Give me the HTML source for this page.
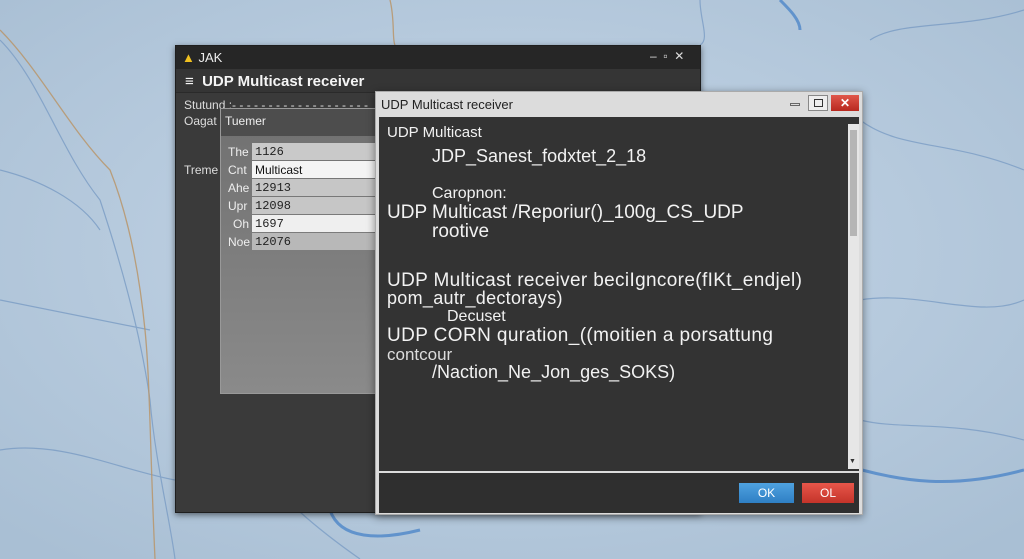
<!DOCTYPE html>
<html><head><meta charset="utf-8"><style>
*{margin:0;padding:0;box-sizing:border-box}
body{width:1024px;height:559px;overflow:hidden;background:#b9cde0;font-family:"Liberation Sans",sans-serif;position:relative}
.abs{position:absolute}
.t{position:absolute;white-space:nowrap;color:#f2f2f2}
.v{position:absolute;left:30px;top:0;width:124px;height:17px;color:#222;padding:2px 3px;font-size:12px;font-family:'Liberation Mono',monospace}
</style></head><body>
<svg class="abs" style="left:0;top:0" width="1024" height="559" viewBox="0 0 1024 559">
<defs><radialGradient id="g" cx="50%" cy="45%" r="70%"><stop offset="0" stop-color="#c6d7e8"/><stop offset="1" stop-color="#a9bfd4"/></radialGradient></defs>
<rect width="1024" height="559" fill="url(#g)"/>
<g fill="none" stroke="#7a9cc4" stroke-width="1.2" opacity="0.8">
<path d="M0 40 C40 80 60 150 100 200 C120 260 140 330 150 400 C155 460 170 520 175 559"/>
<path d="M0 170 C40 180 80 200 100 230"/>
<path d="M0 300 C50 310 100 320 150 330"/>
<path d="M0 450 C60 440 120 470 175 480"/>
<path d="M860 120 C900 150 950 140 1024 170"/>
<path d="M860 300 C920 290 980 320 1024 300"/>
<path d="M870 40 C900 20 960 30 1024 10"/>
<path d="M300 512 C320 530 340 545 360 559"/>
<path d="M700 0 C700 20 710 40 700 45"/>
<path d="M860 420 C900 430 950 420 1024 440"/>
</g>
<g fill="none" stroke="#b8956a" stroke-width="1.3" opacity="0.85">
<path d="M0 30 C40 70 70 130 110 170 C130 220 140 280 145 330 C150 380 150 450 155 559"/>
<path d="M390 0 C395 20 392 40 395 45"/>
</g>
<g fill="none" stroke="#4e86c8" stroke-width="3" opacity="0.8">
<path d="M330 510 C340 540 380 540 420 530"/>
<path d="M862 470 C900 480 950 490 1024 470"/>
<path d="M780 0 C790 10 800 20 800 30"/>
</g>
</svg>

<div class="abs" style="left:175px;top:45px;width:526px;height:468px;background:#3a3a3a;border:1px solid #1e1e1e;box-shadow:0 2px 6px rgba(0,0,0,.5)">
 <div class="abs" style="left:0;top:0;width:524px;height:23px;background:#262626"></div>
 <div class="t" style="left:6px;top:4px;font-size:13px;color:#eee"><span style="color:#f0c020">▲</span> JAK</div>
 <div class="t" style="left:474px;top:3px;font-size:12px;color:#ddd">–&nbsp;&nbsp;▫&nbsp;&nbsp;✕</div>
 <div class="abs" style="left:0;top:23px;width:524px;height:24px;background:#353535;border-bottom:1px solid #2a2a2a"></div>
 <div class="t" style="left:9px;top:27px;font-size:15px;font-weight:bold;color:#f5f5f5">≡&nbsp; UDP Multicast receiver</div>
 <div class="t" style="left:8px;top:52px;font-size:12px;color:#ddd">Stutund :- - - - - - - - - - - - - - - - - - -</div>
 <div class="t" style="left:8px;top:68px;font-size:12px;color:#ddd">Oagat</div>
 <div class="t" style="left:8px;top:117px;font-size:12px;color:#ddd">Treme</div>
 <div class="abs" style="left:44px;top:62px;width:162px;height:286px;background:linear-gradient(#707070,#8a8a8a);border:1px solid #999">
  <div class="abs" style="left:0;top:0;width:160px;height:27px;background:#4d4d4d"></div>
  <div class="t" style="left:4px;top:5px;font-size:12px;color:#eee">Tuemer</div>
 </div>
</div>
<div class="abs" style="left:222px;top:143px;width:154px;font-size:12px">
 <div style="height:18px;position:relative"><span class="t" style="left:6px;top:2px;color:#eee">The</span><div class="v" style="background:#c9c9c9">1126</div></div>
 <div style="height:18px;position:relative"><span class="t" style="left:6px;top:2px;color:#eee">Cnt</span><div class="v" style="background:#f4f4f4;font-family:'Liberation Sans',sans-serif;color:#111">Multicast</div></div>
 <div style="height:18px;position:relative"><span class="t" style="left:6px;top:2px;color:#eee">Ahe</span><div class="v" style="background:#c6c6c6">12913</div></div>
 <div style="height:18px;position:relative"><span class="t" style="left:6px;top:2px;color:#eee">Upr</span><div class="v" style="background:#c6c6c6">12098</div></div>
 <div style="height:18px;position:relative"><span class="t" style="left:11px;top:2px;color:#eee">Oh</span><div class="v" style="background:#efefef">1697</div></div>
 <div style="height:18px;position:relative"><span class="t" style="left:6px;top:2px;color:#eee">Noe</span><div class="v" style="background:#b8b8b8">12076</div></div>
</div>

<div class="abs" style="left:375px;top:91px;width:488px;height:424px;background:#dcdcdc;border:1px solid #aaa;box-shadow:0 2px 8px rgba(0,0,0,.45)">
 <div class="t" style="left:5px;top:5px;font-size:13px;color:#222">UDP Multicast receiver</div>
 <div class="abs" style="left:414px;top:11px;width:10px;height:3px;border:1px solid #666"></div>
 <div class="abs" style="left:432px;top:3px;width:20px;height:16px;border:1px solid #888;background:#eee"><div style="margin:3px 5px;width:9px;height:8px;border:1px solid #333"></div></div>
 <div class="abs" style="left:455px;top:3px;width:28px;height:16px;background:linear-gradient(#e0574a,#b8281f);color:#fff;font-size:12px;text-align:center;line-height:16px;font-weight:bold">✕</div>
 <div class="abs" style="left:3px;top:25px;width:480px;height:354px;background:#333333"></div>
 <div class="abs" style="left:472px;top:32px;width:11px;height:345px;background:#e6e6e6"><div style="margin:6px 2px;width:7px;height:106px;background:#b5b5b5"></div></div>
 <div class="t" style="left:473px;top:27px;font-size:7px;color:#333">▲</div>
 <div class="t" style="left:473px;top:366px;font-size:7px;color:#333">▼</div>
 <div class="abs" style="left:3px;top:381px;width:480px;height:40px;background:#2f2f2f"></div>
 <div class="abs" style="left:363px;top:391px;width:55px;height:20px;background:linear-gradient(#4fa2e0,#2f7fc4);color:#fff;font-size:12px;text-align:center;line-height:20px">OK</div>
 <div class="abs" style="left:426px;top:391px;width:52px;height:20px;background:linear-gradient(#e8564a,#c4342a);color:#fff;font-size:12px;text-align:center;line-height:20px">OL</div>
</div>
<div class="t" style="left:387px;top:124px;font-size:15px">UDP Multicast</div>
<div class="t" style="left:432px;top:146px;font-size:18px">JDP_Sanest_fodxtet_2_18</div>
<div class="t" style="left:432px;top:185px;font-size:16px">Caropnon:</div>
<div class="t" style="left:387px;top:202px;font-size:19px">UDP Multicast /Reporiur()_100g_CS_UDP</div>
<div class="t" style="left:432px;top:221px;font-size:19px">rootive</div>
<div class="t" style="left:387px;top:270px;font-size:19px;letter-spacing:0.35px">UDP Multicast receiver beciIgncore(fIKt_endjel)</div>
<div class="t" style="left:387px;top:288px;font-size:18px;letter-spacing:0.3px">pom_autr_dectorays)</div>
<div class="t" style="left:447px;top:308px;font-size:16px">Decuset</div>
<div class="t" style="left:387px;top:325px;font-size:19px;letter-spacing:0.4px">UDP CORN quration_((moitien a porsattung</div>
<div class="t" style="left:387px;top:345px;font-size:17px;color:#ddd">contcour</div>
<div class="t" style="left:432px;top:362px;font-size:18px">/Naction_Ne_Jon_ges_SOKS)</div>
</body></html>
